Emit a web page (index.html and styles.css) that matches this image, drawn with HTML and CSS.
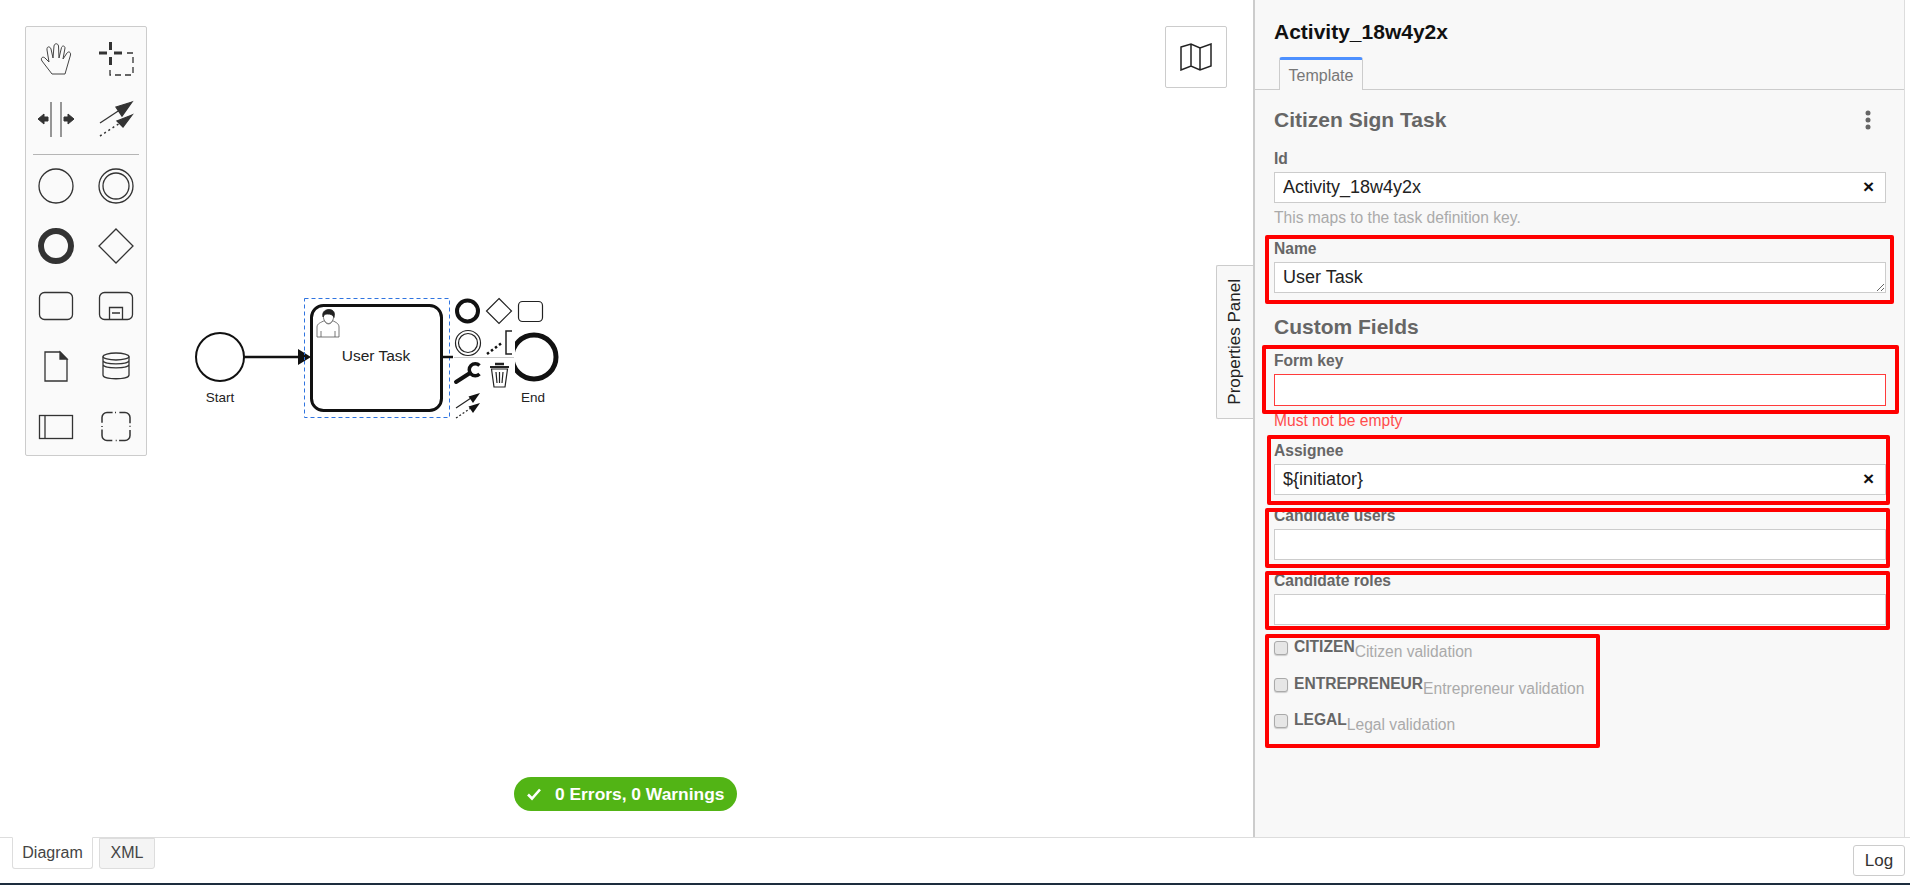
FILE: index.html
```html
<!DOCTYPE html>
<html lang="en">
<head>
<meta charset="utf-8">
<title>Modeler</title>
<link rel="stylesheet" href="styles.css">
</head>
<body>
<div class="app">
  <div class="main">
    <div class="canvas">
      <svg class="diagram" viewBox="0 0 1253 837" width="1253" height="837">
        <rect class="sel" x="304.5" y="298.5" width="145" height="119"/>
        <circle class="ev" cx="220" cy="357" r="24"/>
        <path class="flow" d="M244 357H300"/>
        <path class="head" d="M298 349L311 357L298 365Z"/>
        <rect class="task" x="311.5" y="305.5" width="130" height="105" rx="12"/>
        <path class="sel-over" d="M304.5 352V362"/>
        <g class="user">
          <path d="M317 337V327C317 323.5 321 322.5 324.5 320.5C326 325 331 325 332.5 320.5C336 322.5 339 323.5 339 327V337ZM321 331V337M335 331V337"/>
          <path d="M323.5 316C323 320 326 323.5 328.5 323.5C331 323.5 334 320 333.5 316"/>
          <path class="hair" d="M323 317C321.5 311 326.5 309.5 329 309.5C333 309.5 335.500 312 334 317.500C333 314.500 330 314 327 314C325 314 324 315 323 317Z"/>
        </g>
        <circle class="end" cx="534" cy="357" r="22"/>
        <path class="flow" d="M442 357H454"/>
        <rect class="pad" x="453" y="295" width="62" height="130"/>
        <path class="ghost" d="M454 357.5H514"/>
        <text class="lbl" x="220" y="402">Start</text>
        <text class="lbl" x="533" y="402">End</text>
        <text class="name" x="376" y="361">User Task</text>
        <circle class="pi thick" cx="467.5" cy="311" r="10.5"/>
        <path class="pi" d="M499 298.5L511.5 311L499 323.5L486.5 311Z"/>
        <rect class="pi" x="518.5" y="301.5" width="24" height="20" rx="4"/>
        <circle class="pi" cx="468" cy="343" r="12.5"/>
        <circle class="pi" cx="468" cy="343" r="9.5"/>
        <path class="pi dots" d="M487 354L503 342"/>
        <path class="pi br" d="M512 331H506V354H512"/>
        <path class="wr" d="M456 382L470 373"/>
        <path class="wr2" d="M479.5 365.5A6 6 0 1 0 479.5 374"/>
        <path class="pi" d="M491.5 369L494 387H505L507.5 369ZM496 372L497 383M499.5 372V383M503 372L502 383"/>
        <path class="wr3" d="M490 367H509"/>
        <path class="wr4" d="M495 364H504"/>
        <path class="pi" d="M456 408L474 396"/>
        <path class="solid" d="M480 393L468.500 396.500L473 403Z"/>
        <path class="pi dots2" d="M456 418L474 406"/>
        <path class="solid" d="M480 403L468.500 406.500L473 413Z"/>
      </svg>

      <div class="palette">
        <div class="pal-grid">
          <svg class="ic hand" viewBox="26 29 60 60"><path d="M52 74L42 61C40 58 43 56 45 58L49 62L47 50C46.500 46 50 46 51 49L53 58L54 46C54.500 43 58 43 58.500 46L59 58L61.500 47.500C62.500 45 65 46 65 48L63 59L67 53C68.500 51 71 52 70.500 55L65 74Z"/></svg>
          <svg class="ic" viewBox="86 29 60 60"><path class="tk" d="M99 53H107M114 53H122M110.500 42V50M110.500 57V65"/><path class="dash" d="M127 53H133V75H110V66"/></svg>
          <svg class="ic thin" viewBox="26 89 60 60"><path d="M51 102V137M61 102V137"/><path class="fl" d="M38 119L44 114V117H48V121H44V124ZM74 119L68 114V117H64V121H68V124Z"/></svg>
          <svg class="ic" viewBox="86 89 60 60"><path d="M100 123L122 108.500"/><path class="fl" d="M132 102L116 107L122 116Z"/><path class="dot" d="M100 136L120 123"/><path class="fl" d="M132 115L117 121L123 127Z"/></svg>
        </div>
        <hr class="pal-sep">
        <div class="pal-grid">
          <svg class="ic" viewBox="26 156 60 60"><circle cx="56" cy="186" r="17"/></svg>
          <svg class="ic" viewBox="86 156 60 60"><circle cx="116" cy="186" r="17"/><circle cx="116" cy="186" r="13"/></svg>
          <svg class="ic" viewBox="26 216 60 60"><circle class="th" cx="56" cy="246" r="15"/></svg>
          <svg class="ic" viewBox="86 216 60 60"><path d="M116 229L133 246L116 263L99 246Z"/></svg>
          <svg class="ic" viewBox="26 276 60 60"><rect x="39.500" y="292.500" width="33" height="27" rx="5"/></svg>
          <svg class="ic" viewBox="86 276 60 60"><rect x="99.500" y="292.500" width="33" height="27" rx="5"/><path d="M109.500 320V307.500H122.500V320M112 313H120"/></svg>
          <svg class="ic" viewBox="26 336 60 60"><path d="M45 352H60L67 359V381H45Z"/><path class="fl" d="M60 352V359H67Z"/></svg>
          <svg class="ic" viewBox="86 336 60 60"><ellipse cx="116" cy="356.500" rx="13" ry="3.500"/><path d="M103 356.500V375C103 380 129 380 129 375V356.500M103 360.500C103 365 129 365 129 360.500M103 364.500C103 369 129 369 129 364.500"/></svg>
          <svg class="ic" viewBox="26 396 60 60"><rect x="39.500" y="415.500" width="33" height="23"/><path d="M45 415.500V438.500"/></svg>
          <svg class="ic" viewBox="86 396 60 60"><rect class="grp" x="102" y="412.500" width="28" height="28" rx="5"/></svg>
        </div>
      </div>

      <button class="minimap" type="button" aria-label="Map">
        <svg viewBox="0 0 32 28" width="32" height="28"><path d="M1 4L11 1L20 5L31 1V23L20 27L11 23L1 27ZM11 1V23M20 5V27"/></svg>
      </button>

      <div class="pill">
        <svg class="chk" viewBox="0 0 16 14" width="16" height="14"><path d="M2 7.500L6 11.500L14 2.500"/></svg>
        <span>0 Errors, 0 Warnings</span>
      </div>
    </div>

    <aside class="panel">
      <div class="toggle"><span>Properties Panel</span></div>
      <h1 class="ptitle">Activity_18w4y2x</h1>
      <div class="ptabs"><span class="ptab">Template</span></div>
      <div class="pbody">
        <div class="phead">
          <h2 class="sect">Citizen Sign Task</h2>
          <svg class="more" viewBox="0 0 6 20" width="6" height="20"><circle cx="3" cy="3" r="2.500"/><circle cx="3" cy="10" r="2.500"/><circle cx="3" cy="17" r="2.500"/></svg>
        </div>
        <div class="field first">
          <label class="flabel">Id</label>
          <div class="inwrap"><input class="inp" type="text" value="Activity_18w4y2x"><span class="clr">×</span></div>
          <div class="hint">This maps to the task definition key.</div>
        </div>
        <div class="field name-field">
          <label class="flabel">Name</label>
          <textarea class="inp area">User Task</textarea>
        </div>
        <h2 class="sect custom">Custom Fields</h2>
        <div class="field formkey">
          <label class="flabel">Form key</label>
          <input class="inp invalid" type="text">
          <div class="err">Must not be empty</div>
        </div>
        <div class="field">
          <label class="flabel">Assignee</label>
          <div class="inwrap"><input class="inp" type="text" value="${initiator}"><span class="clr">×</span></div>
        </div>
        <div class="field">
          <label class="flabel">Candidate users</label>
          <input class="inp" type="text">
        </div>
        <div class="field">
          <label class="flabel">Candidate roles</label>
          <input class="inp" type="text">
        </div>
        <div class="checks">
          <label class="chkrow"><input class="cb" type="checkbox"><span class="cbt">CITIZEN</span><span class="cbd">Citizen validation</span></label>
          <label class="chkrow"><input class="cb" type="checkbox"><span class="cbt">ENTREPRENEUR</span><span class="cbd">Entrepreneur validation</span></label>
          <label class="chkrow"><input class="cb" type="checkbox"><span class="cbt">LEGAL</span><span class="cbd">Legal validation</span></label>
        </div>
      </div>
    </aside>
  </div>

  <div class="footer">
    <span class="ftab active">Diagram</span>
    <span class="ftab xml">XML</span>
    <button class="log" type="button">Log</button>
  </div>
  <div class="bar"></div>

  <div class="mark m-name"></div>
  <div class="mark m-form"></div>
  <div class="mark m-assign"></div>
  <div class="mark m-users"></div>
  <div class="mark m-roles"></div>
  <div class="mark m-checks"></div>
</div>
</body>
</html>
```

FILE: styles.css
```css
* { box-sizing: border-box; }
html, body { margin: 0; padding: 0; height: 100%; overflow: hidden; background: #fff; }
body { font-family: "Liberation Sans", Arial, sans-serif; color: #333; }
.app { position: relative; width: 1910px; height: 885px; display: flex; flex-direction: column; }
.main { height: 837px; display: flex; padding-right: 5px; }
.canvas { position: relative; flex: 1; min-width: 0; }

.diagram { position: absolute; left: 0; top: 0; }
.diagram text { font-family: "Liberation Sans", Arial, sans-serif; fill: #222; text-anchor: middle; }
.lbl { font-size: 13.500px; }
.name { font-size: 15.500px; }
.sel { fill: none; stroke: #2f74e0; stroke-width: 1; stroke-dasharray: 4 3; }
.ev { fill: #fff; stroke: #111; stroke-width: 2; }
.flow { fill: none; stroke: #111; stroke-width: 2.500; }
.head { fill: #111; }
.task { fill: #fff; stroke: #111; stroke-width: 3; }
.sel-over { fill: none; stroke: #2f74e0; stroke-width: 1; stroke-dasharray: 3 2; }
.user path { fill: #fff; stroke: #555; stroke-width: .8; }
.user .hair { fill: #222; stroke: #222; }
.end { fill: #fff; stroke: #111; stroke-width: 5; }
.pad { fill: #fff; }
.ghost { fill: none; stroke: #ccc; stroke-width: 1; }
.pi { fill: none; stroke: #222; stroke-width: 1.200; }
.thick { stroke: #111; stroke-width: 4; }
.dots { stroke-width: 2.500; stroke-dasharray: 2.500 2.500; stroke: #111; }
.br { stroke-width: 1.500; }
.wr { fill: none; stroke: #111; stroke-width: 4; stroke-linecap: round; }
.wr2 { fill: none; stroke: #111; stroke-width: 3.500; }
.wr3 { fill: none; stroke: #222; stroke-width: 2; }
.wr4 { fill: none; stroke: #222; stroke-width: 2.500; }
.dots2 { stroke-dasharray: 2 2; }
.solid { fill: #111; }

.palette { position: absolute; left: 25px; top: 26px; width: 122px; height: 430px; padding-top: 2px; background: #fafafa; border: 1px solid #ccc; border-radius: 2px; }
.pal-grid { display: grid; grid-template-columns: 60px 60px; grid-auto-rows: 60px; }
.pal-sep { margin: 5px 7px 1px; height: 1px; border: 0; background: #b5b5b5; }
.ic { display: block; width: 60px; height: 60px; fill: none; stroke: #333; stroke-width: 1.300; }
.ic.hand { stroke-width: 1; stroke: #444; }
.ic.thin { stroke-width: 1; }
.ic .fl { fill: #333; }
.ic .tk { stroke-width: 3; }
.ic .dash { stroke-dasharray: 6 4; }
.ic .dot { stroke-dasharray: 2 3; stroke-width: 1.500; }
.ic .th { stroke-width: 6; }
.ic .grp { stroke-dasharray: 19 2.400 1 3.400; stroke-dashoffset: 13.400; stroke-width: 1.500; }

.minimap { position: absolute; left: 1165px; top: 26px; width: 62px; height: 62px; padding: 0; display: flex; align-items: center; justify-content: center; background: #fff; border: 1px solid #ccc; border-radius: 2px; }
.minimap path { fill: none; stroke: #222; stroke-width: 1.500; }

.pill { position: absolute; left: 514px; top: 777px; width: 223px; height: 34px; display: flex; align-items: center; padding-left: 12px; gap: 13px; background: #52b415; border-radius: 17px; color: #fff; font-weight: 700; font-size: 17.400px; white-space: nowrap; }
.chk path { fill: none; stroke: #fff; stroke-width: 2.600; }

.panel { position: relative; width: 652px; flex: none; background: #f8f8f8; border-left: 2px solid #ccc; border-right: 1px solid #ddd; }
.toggle { position: absolute; left: -39px; top: 265px; width: 37px; height: 154px; display: flex; align-items: center; justify-content: center; background: #f8f8f8; border: 1px solid #ccc; border-right: 0; border-radius: 2px 0 0 2px; }
.toggle span { writing-mode: vertical-rl; transform: rotate(180deg); font-size: 17px; color: #222; white-space: nowrap; }
.ptitle { margin: 0; padding: 21px 0 0 19px; font-size: 21px; line-height: 22px; font-weight: 700; color: #111; }
.ptabs { margin-top: 14px; height: 33px; padding-left: 24px; border-bottom: 1px solid #ccc; }
.ptab { display: inline-block; width: 84px; height: 33px; line-height: 26px; text-align: center; padding-top: 3px; font-size: 16px; color: #777; background: #f8f8f8; border: 1px solid #ccc; border-top: 3px solid #4d90ff; border-bottom: 0; border-radius: 3px 3px 0 0; }
.pbody { padding: 19px 18px 0 19px; }
.phead { display: flex; align-items: center; justify-content: space-between; height: 22px; padding-right: 0; }
.more { fill: #666; margin-right: 15px; }
.sect { margin: 0; font-size: 21px; line-height: 22px; font-weight: 700; color: #666; }
.field { margin-top: 12px; }
.field.first { margin-top: 19px; }
.flabel { display: block; height: 16px; line-height: 18px; margin-bottom: 6px; font-size: 15.600px; font-weight: 700; color: #666; }
.inwrap { position: relative; }
.inp { display: block; width: 100%; height: 31px; padding: 0 8px; margin: 0; font: 18px "Liberation Sans", Arial, sans-serif; color: #222; background: #fff; border: 1px solid #ccc; border-radius: 0; outline: 0; }
.area { padding-top: 4px; line-height: 20px; resize: vertical; overflow: hidden; }
.invalid { height: 32px; border-color: #ff3b3b; }
.clr { position: absolute; right: 12px; top: 5px; font-size: 19px; line-height: 20px; font-weight: 700; color: #111; }
.hint { margin-top: 7px; font-size: 15.600px; line-height: 16px; color: #aaa; }
.err { margin-top: 6px; margin-bottom: 14px; font-size: 15.600px; line-height: 18px; height: 16px; color: #ff4d4d; }
.name-field { margin-top: 14px; }
.custom { margin-top: 23px; }
.formkey { margin-top: 14px; }
.checks { margin-top: 8px; }
.chkrow { display: flex; align-items: flex-start; height: 36.500px; font-size: 15.600px; color: #666; }
.cb { appearance: none; -webkit-appearance: none; flex: none; width: 14px; height: 14px; margin: 8px 6px 0 0; background: #e6e6e6; border: 1px solid #aaa; border-radius: 3px; box-shadow: 0 1px 1px #ccc; }
.cbt { font-weight: 700; line-height: 16px; margin-top: 6px; }
.cbd { font-size: 15.600px; line-height: 16px; margin-top: 11px; color: #aaa; }

.footer { position: relative; height: 46px; display: flex; align-items: flex-start; padding: 0 5px 0 12px; gap: 6px; border-top: 1px solid #ddd; background: #fff; }
.ftab { display: block; height: 31px; line-height: 28px; padding: 0 11px; margin-top: 0; font-size: 16px; color: #444; background: #f4f4f4; border: 1px solid #ddd; border-radius: 0 0 3px 3px; }
.ftab.xml { width: 56px; padding: 0; text-align: center; }
.ftab.active { width: 81px; margin-top: -1px; height: 32px; line-height: 30px; padding: 0; text-align: center; background: #fff; border-top: 1px solid #fff; }
.log { margin: 7px 0 0 auto; width: 52px; height: 31px; padding: 0; font: 17px "Liberation Sans", Arial, sans-serif; color: #333; background: #fff; border: 1px solid #ccc; border-radius: 3px; }
.bar { height: 2px; background: #1d2d3d; }

.mark { position: absolute; border: 4px solid #f00; border-radius: 2px; pointer-events: none; }
.m-name { left: 1265px; top: 235px; width: 629px; height: 69px; }
.m-form { left: 1262px; top: 345px; width: 637px; height: 69px; }
.m-assign { left: 1267px; top: 435px; width: 623px; height: 70px; }
.m-users { left: 1265px; top: 508px; width: 625px; height: 60px; }
.m-roles { left: 1265px; top: 571px; width: 625px; height: 59px; }
.m-checks { left: 1265px; top: 634px; width: 335px; height: 114px; }
```
